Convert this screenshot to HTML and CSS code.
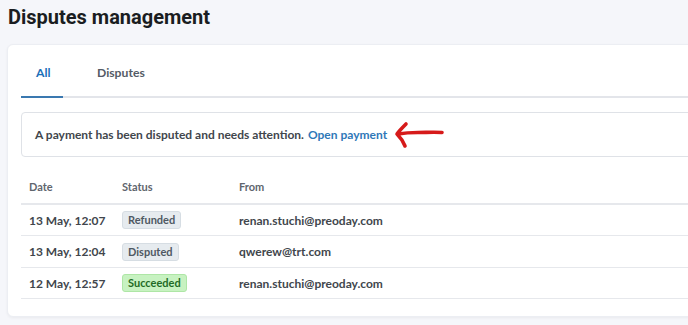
FILE: index.html
```html
<!DOCTYPE html>
<html>
<head>
<meta charset="utf-8">
<link rel="stylesheet" href="styles.css">
</head>
<body>
<h1 class="title">Disputes management</h1>
<div class="card">
  <div class="tabs">
    <div class="tab active">All</div>
    <div class="tab">Disputes</div>
  </div>
  <div class="alert">
    <span>A payment has been disputed and needs attention.</span>
    <a class="link">Open payment</a>
    <svg class="arrow" width="52" height="28" viewBox="0 0 52 28">
      <path d="M12 3 C8 7 5 10 3 13 C6 16 9 20 11 25 M4 13 C10 12 16 11.5 24 11.5 C32 11.5 40 11 48 11.5" fill="none" stroke="#d61a1a" stroke-width="3.6" stroke-linecap="round" stroke-linejoin="round"/>
    </svg>
  </div>
  <div class="table">
    <div class="row head">
      <div class="c1">Date</div><div class="c2">Status</div><div class="c3">From</div>
    </div>
    <div class="row">
      <div class="c1">13 May, 12:07</div><div class="c2"><span class="badge gray">Refunded</span></div><div class="c3">renan.stuchi@preoday.com</div>
    </div>
    <div class="row">
      <div class="c1">13 May, 12:04</div><div class="c2"><span class="badge gray">Disputed</span></div><div class="c3">qwerew@trt.com</div>
    </div>
    <div class="row">
      <div class="c1">12 May, 12:57</div><div class="c2"><span class="badge green">Succeeded</span></div><div class="c3">renan.stuchi@preoday.com</div>
    </div>
  </div>
</div>
</body>
</html>
```
FILE: styles.css
```css
* { box-sizing: border-box; }
html, body { margin: 0; padding: 0; }
body {
  background: #f5f6fa;
  font-family: Lato, "Open Sans", sans-serif;
  color: #30363d;
  width: 688px;
  height: 325px;
  overflow: hidden;
}
.title {
  margin: 0;
  padding: 3px 0 0 8px;
  height: 44px;
  font-family: Roboto, "Noto Sans", sans-serif;
  font-size: 20px;
  font-weight: 700;
  color: #1a1d21;
  line-height: 28px;
}
.card {
  margin-left: 7px;
  width: 700px;
  height: 273px;
  background: #fff;
  border-radius: 6px;
  border: 1px solid #eceef3;
  box-shadow: 0 1px 3px rgba(0,0,0,0.05);
  padding: 0 0 0 13px;
}
.tabs {
  display: flex;
  height: 53px;
  border-bottom: 2px solid #e3e5ea;
}
.tab {
  font-size: 12.2px;
  font-weight: 700;
  color: #545b66;
  padding: 20px 0 0 0;
  margin-bottom: -2px;
}
.tab.active {
  color: #1c6fb8;
  width: 42px;
  padding-left: 15px;
  border-bottom: 2px solid #3a78b0;
  margin-right: 34px;
}
.alert {
  margin-top: 14px;
  height: 45px;
  border: 1px solid #dfe2e7;
  border-radius: 4px;
  display: flex;
  align-items: center;
  padding-left: 13px;
  font-size: 12px;
  font-weight: 700;
  color: #41464c;
  gap: 4px;
}
.link { color: #2f78b8; }
.arrow { margin-left: 3px; margin-top: 1px; }
.table { margin-top: 13px; }
.row {
  display: flex;
  align-items: center;
  height: 31px;
  border-bottom: 1px solid #e6e8ec;
  font-size: 12px;
  color: #41464c;
  font-weight: 700;
}
.row:nth-child(3) { height: 32px; }
.row.head {
  height: 35px;
  font-size: 11px;
  color: #5f666e;
  border-bottom: 2px solid #e6e8ec;
}
.c1 { width: 101px; padding-left: 8px; }
.c2 { width: 117px; }
.c3 { flex: 1; }
.badge {
  display: inline-block;
  font-size: 11px;
  font-weight: 700;
  padding: 0 5px;
  line-height: 16px;
  border-radius: 3px;
  border: 1px solid #d6dde3;
  background: #e6ebef;
  color: #4f5963;
}
.badge.green {
  background: #c7f2c1;
  border-color: #aee6a6;
  color: #1f6b25;
}
```
